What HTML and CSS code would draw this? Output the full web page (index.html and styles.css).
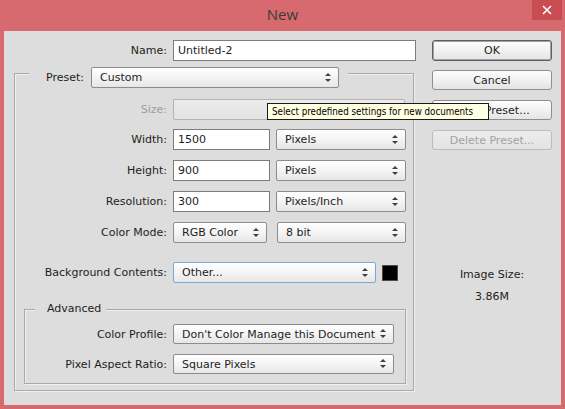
FILE: index.html
```html
<!DOCTYPE html>
<html>
<head>
<meta charset="utf-8">
<title>New</title>
<link rel="stylesheet" href="styles.css">
</head>
<body>
<div class="window">
  <div class="titlebar">
    <div class="title">New</div>
    <div class="close">
      <svg width="10" height="10" viewBox="0 0 10 10"><path d="M1 1 L9 9 M9 1 L1 9" stroke="#fff" stroke-width="1.6" fill="none"/></svg>
    </div>
  </div>
  <div class="dialog">
    <div class="left">
      <div class="name-row">
        <span class="lbl">Name:</span>
        <div class="input name-input">Untitled-2</div>
      </div>
      <div class="group outer">
        <div class="legend preset-legend">
          <span class="lbl preset-lbl">Preset:</span>
          <div class="select preset-select">Custom</div>
        </div>
        <div class="row r-size">
          <span class="lbl dim">Size:</span>
          <div class="field-disabled"></div>
        </div>
        <div class="row r-width">
          <span class="lbl">Width:</span>
          <div class="controls"><div class="input num">1500</div><div class="select unit">Pixels</div></div>
        </div>
        <div class="row r-height">
          <span class="lbl">Height:</span>
          <div class="controls"><div class="input num">900</div><div class="select unit">Pixels</div></div>
        </div>
        <div class="row r-res">
          <span class="lbl">Resolution:</span>
          <div class="controls"><div class="input num">300</div><div class="select unit">Pixels/Inch</div></div>
        </div>
        <div class="row r-mode">
          <span class="lbl">Color Mode:</span>
          <div class="controls wide-gap"><div class="select mode">RGB Color</div><div class="select bits">8 bit</div></div>
        </div>
        <div class="row r-bg">
          <span class="lbl">Background Contents:</span>
          <div class="controls"><div class="select bg focus">Other...</div><div class="swatch"></div></div>
        </div>
        <div class="group advanced">
          <div class="legend adv-legend">Advanced</div>
          <div class="row adv-row r-profile">
            <span class="lbl">Color Profile:</span>
            <div class="select adv-select">Don't Color Manage this Document</div>
          </div>
          <div class="row adv-row r-aspect">
            <span class="lbl">Pixel Aspect Ratio:</span>
            <div class="select adv-select">Square Pixels</div>
          </div>
        </div>
      </div>
    </div>
    <div class="right">
      <div class="btn default">OK</div>
      <div class="btn b-cancel">Cancel</div>
      <div class="btn b-save">Save Preset...</div>
      <div class="btn b-delete disabled">Delete Preset...</div>
      <div class="image-size">
        <div>Image Size:</div>
        <div>3.86M</div>
      </div>
    </div>
    <div class="tooltip">Select predefined settings for new documents</div>
  </div>
</div>
</body>
</html>
```
FILE: styles.css
```css
* { box-sizing: border-box; margin: 0; padding: 0; }
html, body { width: 565px; height: 409px; overflow: hidden; }
body {
  font-family: "DejaVu Sans", sans-serif;
  font-size: 11px;
  color: #1e1e22;
  background: #d66a6f;
}
.window {
  width: 565px;
  height: 409px;
  background: #d66a6f;
  display: flex;
  flex-direction: column;
}
.titlebar {
  height: 31px;
  display: grid;
  grid-template-columns: 1fr auto 1fr;
}
.title {
  grid-column: 2;
  font-family: "Open Sans", sans-serif;
  font-size: 15px;
  line-height: 28px;
  color: #3a3a3a;
}
.close {
  grid-column: 3;
  justify-self: end;
  align-self: start;
  width: 30px;
  height: 20px;
  margin-right: 3px;
  background: #c84d52;
  display: flex;
  align-items: center;
  justify-content: center;
}
.dialog {
  margin: 0 4px;
  height: 374px;
  background: #dddddd;
  display: flex;
  position: relative;
}
.left {
  width: 412px;
  padding-top: 9px;
  display: flex;
  flex-direction: column;
}
.right {
  width: 120px;
  margin-left: 16px;
  padding-top: 9px;
  display: flex;
  flex-direction: column;
}
.lbl { text-align: right; white-space: nowrap; }
.dim { color: #9c9c9c; }
.name-row {
  display: grid;
  grid-template-columns: 163px 243px;
  column-gap: 6px;
  align-items: center;
  height: 21px;
}
.input {
  height: 21px;
  background: #ffffff;
  border: 1px solid #7c7c7c;
  padding-left: 4px;
  display: flex;
  align-items: center;
  white-space: nowrap;
}
.select {
  position: relative;
  height: 21px;
  border: 1px solid #8c8c8c;
  border-radius: 2px;
  background: linear-gradient(#ffffff, #f4f4f4 50%, #e6e6e6);
  padding-left: 8px;
  display: flex;
  align-items: center;
  white-space: nowrap;
}
.select::before,
.select::after {
  content: "";
  position: absolute;
  right: 7px;
  top: 50%;
  border-left: 3px solid transparent;
  border-right: 3px solid transparent;
}
.select::before { margin-top: -5px; border-bottom: 3px solid #404040; }
.select::after { margin-top: 1px; border-top: 3px solid #404040; }
.select.focus { border-color: #78a7da; }
.group {
  border: 1px solid #a9a9a9;
  box-shadow: 1px 1px 0 #f0f0f0, inset 1px 1px 0 #f0f0f0;
  display: flex;
  flex-direction: column;
}
.outer {
  width: 400px;
  margin: 12px 0 0 10px;
  padding-bottom: 6px;
}
.legend {
  background: #dddddd;
  display: flex;
  align-items: center;
  width: max-content;
}
.preset-legend {
  height: 21px;
  margin: -7px 0 0 14px;
  padding-right: 9px;
}
.preset-lbl { width: 55px; margin-right: 7px; }
.preset-select { width: 248px; }
.row {
  display: grid;
  grid-template-columns: 152px auto;
  column-gap: 6px;
  align-items: center;
  height: 21px;
}
.controls { display: flex; align-items: center; gap: 6px; }
.controls.wide-gap { gap: 10px; }
.field-disabled {
  width: 232px;
  height: 21px;
  border: 1px solid #b3b3b3;
  border-radius: 2px;
  background: linear-gradient(#ececec, #e2e2e2);
}
.num { width: 97px; }
.unit { width: 130px; }
.mode { width: 94px; }
.bits { width: 129px; }
.bg { width: 203px; }
.swatch {
  width: 16px;
  height: 16px;
  background: #000000;
  border: 1px solid #4a4a4a;
}
.r-size { margin-top: 11px; }
.r-width { margin-top: 9px; }
.r-height { margin-top: 10px; }
.r-res { margin-top: 10px; }
.r-mode { margin-top: 10px; }
.r-bg { margin-top: 19px; }
.advanced {
  margin: 26px 7px 0 9px;
  padding-bottom: 9px;
}
.adv-legend {
  height: 14px;
  margin: -9px 0 0 10px;
  padding: 0 5px 0 12px;
}
.adv-row { grid-template-columns: 142px auto; height: 20px; }
.adv-row .select { height: 20px; }
.r-profile { margin-top: 9px; }
.r-aspect { margin-top: 10px; }
.adv-select { width: 221px; }
.btn {
  height: 20px;
  border: 1px solid #8e8e8e;
  border-radius: 3px;
  background: linear-gradient(#fdfdfd, #f1f1f1 50%, #e4e4e4);
  display: flex;
  align-items: center;
  justify-content: center;
  white-space: nowrap;
}
.btn.default {
  height: 21px;
  border-color: #5e5e5e;
  box-shadow: inset 0 0 0 1px #a4a4a4;
}
.b-cancel { margin-top: 9px; }
.b-save { margin-top: 10px; }
.b-delete { margin-top: 10px; }
.btn.disabled {
  color: #a2a2a2;
  border-color: #bcbcbc;
  background: linear-gradient(#ececec, #e3e3e3);
}
.image-size {
  margin-top: 114px;
  text-align: center;
  line-height: 22px;
}
.tooltip {
  position: absolute;
  left: 263px;
  top: 72px;
  width: 222px;
  height: 17px;
  background: #ffffe1;
  border: 1px solid #1a1a1a;
  font-family: "DejaVu Sans Condensed", "DejaVu Sans", sans-serif;
  font-size: 9.7px;
  color: #000;
  padding-left: 4px;
  display: flex;
  align-items: center;
  white-space: nowrap;
}
```
